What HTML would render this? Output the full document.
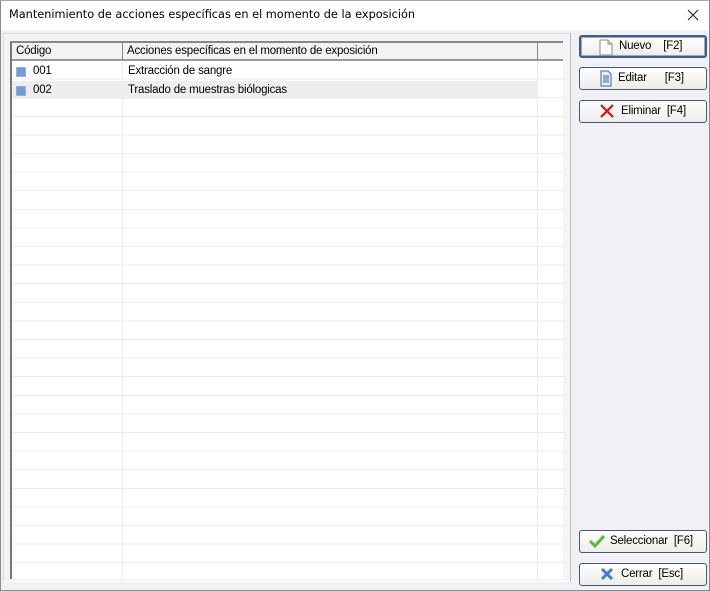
<!DOCTYPE html>
<html><head><meta charset="utf-8"><style>
*{margin:0;padding:0;box-sizing:border-box}
body{width:710px;height:591px;position:relative;overflow:hidden;background:#fff;font-family:"Liberation Sans",sans-serif;font-size:12px;color:#000}
.win{position:absolute;left:0;top:0;width:710px;height:591px;border:1px solid #8a8a8a;border-top-color:#aaa;background:#fff}
.title{position:absolute;left:8px;top:7px;color:#000;font-family:"DejaVu Sans",sans-serif;font-size:11.3px}
.body{position:absolute;left:0;top:29px;width:708px;height:560px;background:#f1f0f4}
.panel{position:absolute;left:2px;top:32px;width:568px;height:549px;border:1px solid #d8d8dc;border-right-color:#b8b8bc;border-bottom-color:#fff;background:#f4f4f6}
.grid{position:absolute;left:9px;top:40px;width:553px;height:538px;background:#fff;border-left:2px solid #777;border-top:2px solid #888;overflow:hidden}
.hdr{position:absolute;left:0;top:0;height:18px;width:553px;background:#f3f3f3;border-bottom:2px solid #999}
.hc{position:absolute;top:0;height:17px;border-right:1px solid #888;padding:2px 0 0 4px;font-size:11.5px;letter-spacing:-0.2px}
.lines{position:absolute;left:0;top:18px;width:553px;height:520px;background:repeating-linear-gradient(to bottom,transparent 0,transparent 17.6px,#ececec 17.6px,#ececec 18.6px)}
.vl{position:absolute;top:18px;bottom:0;width:1px;background:#ececec}
.row{position:absolute;left:0;width:525px;height:18px;font-size:11.5px;letter-spacing:-0.2px}
.row span{position:absolute;top:3px}
.ic{position:absolute;left:4px;top:5px;width:10px;height:10px;background:#6f9be0;border:1px solid #8fb0e8}
.btn{position:absolute;left:578px;width:128px;height:23px;border:1px solid #3c5a7c;border-radius:3px;background:linear-gradient(#fefefe,#eeede8);font-size:11.5px;letter-spacing:-0.2px}
.btn span{position:absolute;top:4px}
svg{position:absolute}
</style></head><body>
<div class="win">
<div class="title">Mantenimiento de acciones específicas en el momento de la exposición</div>
<svg style="left:686px;top:8px" width="12" height="12" viewBox="0 0 12 12"><path d="M1 1L11 11M11 1L1 11" stroke="#222" stroke-width="1.1"/></svg>
<div class="body"></div>
<div class="panel"></div>
<div class="grid">
 <div class="lines"></div>
 <div class="vl" style="left:110px"></div>
 <div class="vl" style="left:525px"></div>
 <div class="row" style="top:38px;background:#eeeeee"></div>
 <div class="hdr">
  <div class="hc" style="left:0;width:111px">Código</div>
  <div class="hc" style="left:111px;width:415px">Acciones específicas en el momento de exposición</div>
 </div>
 <div class="row" style="top:19px"><div class="ic"></div><span style="left:21px">001</span><span style="left:116px">Extracción de sangre</span></div>
 <div class="row" style="top:38px"><div class="ic"></div><span style="left:21px">002</span><span style="left:116px">Traslado de muestras biólogicas</span></div>
</div>
<div class="btn" style="top:34px;border:2px solid #3c5a9c;box-shadow:inset 0 0 0 1px #9ab"><svg style="left:18px;top:2px" width="14" height="17" viewBox="0 0 14 17"><path d="M1 1h8l4 4v11H1z" fill="#fff" stroke="#888"/><path d="M9 1v4h4" fill="#ddd" stroke="#888"/></svg><span style="left:38px;top:3px">Nuevo&nbsp;&nbsp;&nbsp;&nbsp;[F2]</span></div>
<div class="btn" style="top:66px"><svg style="left:20px;top:2px" width="12" height="17" viewBox="0 0 12 17"><path d="M1 1h7l3 3v12H1z" fill="#e8f0ff" stroke="#3a5fb0"/><path d="M3 6h6M3 8h6M3 10h6M3 12h6" stroke="#3a5fb0"/></svg><span style="left:38px">Editar&nbsp;&nbsp;&nbsp;&nbsp;&nbsp;&nbsp;[F3]</span></div>
<div class="btn" style="top:99px"><svg style="left:20px;top:3px" width="14" height="14" viewBox="0 0 14 14"><path d="M1 1L13 13M13 1L1 13" stroke="#d01818" stroke-width="2.2"/></svg><span style="left:41px">Eliminar&nbsp;&nbsp;[F4]</span></div>
<div class="btn" style="top:529px"><svg style="left:8px;top:3px" width="18" height="14" viewBox="0 0 18 14"><path d="M2 7l5 5L16 2" fill="none" stroke="#5cb83c" stroke-width="3"/></svg><span style="left:30px">Seleccionar&nbsp;&nbsp;[F6]</span></div>
<div class="btn" style="top:562px"><svg style="left:20px;top:3px" width="14" height="14" viewBox="0 0 14 14"><path d="M2 2L12 12M12 2L2 12" stroke="#3a7fd0" stroke-width="3"/></svg><span style="left:41px">Cerrar&nbsp;&nbsp;[Esc]</span></div>
</div>
</body></html>
